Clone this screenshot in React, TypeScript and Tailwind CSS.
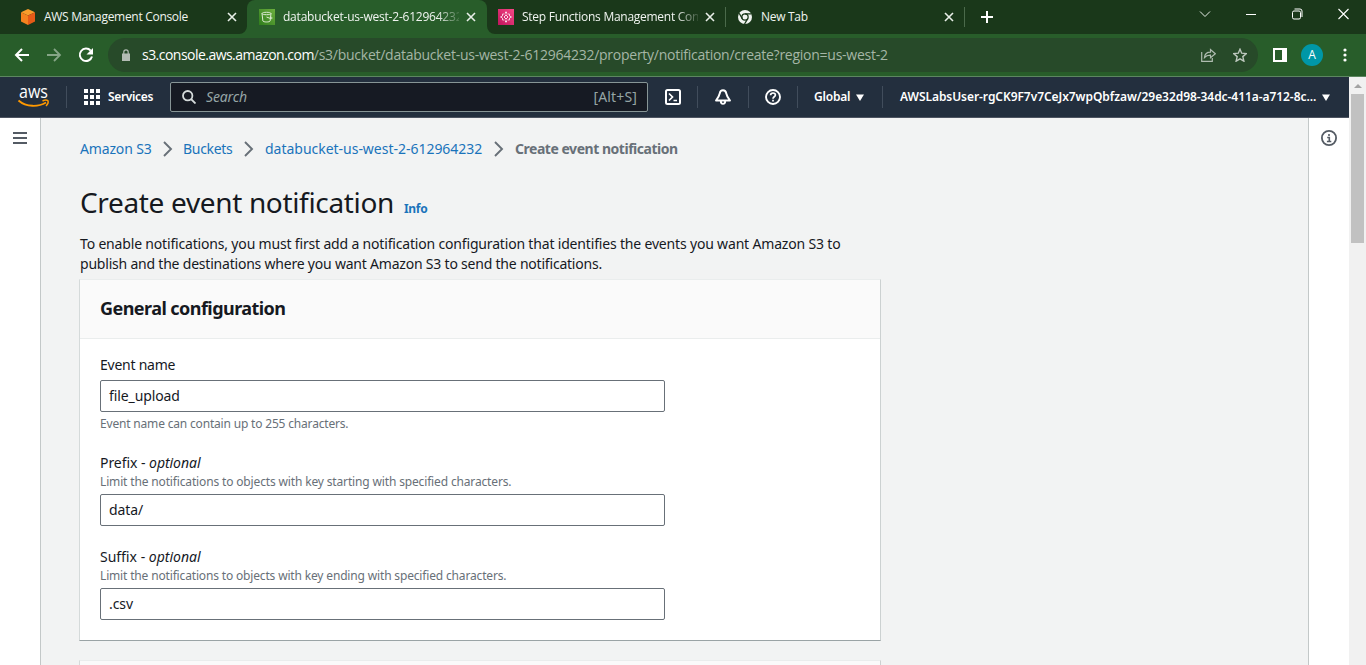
import React from "react";

const SANS = "font-['Noto_Sans',sans-serif]";
const CHROME = "font-['Open_Sans','Noto_Sans',sans-serif]";

function CloseX() {
  return (
    <svg width="10" height="10" viewBox="0 0 10 10" className="shrink-0" stroke="#e9efe9" strokeWidth="1.6">
      <path d="M1 1l8 8M9 1l-8 8" />
    </svg>
  );
}

function CubeIcon() {
  return (
    <svg width="16" height="16" viewBox="0 0 16 16" className="shrink-0">
      <path d="M8 0l7 3.2L8 6.6 1 3.2z" fill="#f99d2c" />
      <path d="M1 3.2l7 3.4V16l-7-3.6z" fill="#f5821f" />
      <path d="M15 3.2L8 6.6V16l7-3.6z" fill="#e65a17" />
    </svg>
  );
}

function BucketIcon() {
  return (
    <svg width="16" height="16" viewBox="0 0 16 16" className="shrink-0">
      <defs>
        <linearGradient id="bucket" x1="0" y1="1" x2="1" y2="0">
          <stop offset="0" stopColor="#2f7d1c" />
          <stop offset="1" stopColor="#6cae3e" />
        </linearGradient>
      </defs>
      <path fill="url(#bucket)" d="M0 0h16v16H0z" />
      <g fill="none" stroke="#dcebd3" strokeWidth="1">
        <path d="M3 4.500c0-1.600 9-1.600 9 0s-9 1.600-9 0l.9 7.500c.3 1.300 6.900 1.300 7.200 0L12 4.500M7.500 8l4 1.500c2 .6 2.200-.6.3-1.800" />
      </g>
    </svg>
  );
}

function StepIcon() {
  return (
    <svg width="16" height="16" viewBox="0 0 16 16" className="shrink-0">
      <defs>
        <linearGradient id="steps" x1="0" y1="1" x2="1" y2="0">
          <stop offset="0" stopColor="#c0145c" />
          <stop offset="1" stopColor="#f64785" />
        </linearGradient>
      </defs>
      <path fill="url(#steps)" d="M0 0h16v16H0z" />
      <g fill="none" stroke="#fbd9e7" strokeWidth="1">
        <path d="M8 2.500v3M8 10.500v3M7 3.500h2M7 12.500h2M8 6l2 2-2 2-2-2z" />
        <path d="M6.500 5h-2v2L2.500 8l2 1v2h2M9.500 5h2v2l2 1-2 1v2h-2" strokeWidth=".9" />
      </g>
    </svg>
  );
}

function ChromeIcon() {
  return (
    <svg width="14" height="14" viewBox="0 0 24 24" className="shrink-0">
      <circle cx="12" cy="12" r="12" fill="#f1f4f1" />
      <g stroke="#1a381a" strokeWidth="2.200" fill="none">
        <circle cx="12" cy="12" r="5.400" />
        <path d="M12 6.600h11M7.300 14.700L2 5.500M16.700 14.700L11.200 24" />
      </g>
    </svg>
  );
}

function TabStrip() {
  return (
    <div className="flex h-[34px] bg-[#1a381a] text-[12px] leading-4 tracking-[-0.3px] text-[#f0f4f0]">
      <div className="flex w-[247px] items-center rounded-br-lg bg-[#1a381a] pr-[10px] pl-5">
        <CubeIcon />
        <span className="ml-2 flex-1 whitespace-nowrap">AWS Management Console</span>
        <CloseX />
      </div>
      <div className="relative flex w-[240px] items-center rounded-t-lg bg-[#285d2a] pr-[11px] pl-3">
        <svg width="8" height="8" viewBox="0 0 8 8" className="absolute bottom-0 -left-2" fill="#285d2a"><path d="M8 0v8H0a8 8 0 0 0 8-8z" /></svg>
        <svg width="8" height="8" viewBox="0 0 8 8" className="absolute -right-2 bottom-0" fill="#285d2a"><path d="M0 0v8h8a8 8 0 0 1-8-8z" /></svg>
        <BucketIcon />
        <span className="ml-2 w-[176px] overflow-hidden tracking-[-0.22px] whitespace-nowrap [mask-image:linear-gradient(to_right,black_154px,transparent_180px)]">databucket-us-west-2-612964232</span>
        <span className="flex-1" />
        <CloseX />
      </div>
      <div className="flex w-[238px] items-center pr-[10px] pl-[11px]">
        <StepIcon />
        <span className="ml-2 w-[176px] overflow-hidden tracking-[-0.27px] whitespace-nowrap [mask-image:linear-gradient(to_right,black_154px,transparent_180px)]">Step Functions Management Console</span>
        <span className="flex-1" />
        <CloseX />
      </div>
      <div className="my-[7px] flex w-[240px] items-center border-x border-[#4b6a4b] pr-[10px] pl-3">
        <ChromeIcon />
        <span className="ml-[9px] flex-1 whitespace-nowrap">New Tab</span>
        <CloseX />
      </div>
      <svg width="12" height="12" viewBox="0 0 12 12" className="mt-[11px] ml-4" stroke="#fff" strokeWidth="2"><path d="M6 0v12M0 6h12" /></svg>
      <div className="ml-auto flex items-center gap-[35px] pr-[17px] pb-[6px]">
        <svg width="12" height="12" viewBox="0 0 12 12" fill="none" stroke="#e8ede8"><path d="M1 3.500l5 5 5-5" /></svg>
        <svg width="10" height="12" viewBox="0 0 10 12" stroke="#fff" className="mr-px"><path d="M0 6.500h10" /></svg>
        <svg width="11" height="12" viewBox="0 0 11 12" fill="none" stroke="#fff"><rect x=".5" y="3" width="8" height="8" rx="1.500" /><path d="M2.500 1h5.500a2 2 0 0 1 2 2v6" /></svg>
        <svg width="11" height="12" viewBox="0 0 11 12" stroke="#fff" strokeWidth="1.100"><path d="M.5 1l10 10M10.500 1l-10 10" /></svg>
      </div>
    </div>
  );
}

function AddressBar() {
  return (
    <div className="flex h-[43px] items-center border-b border-[#5c8660] bg-[#285d2a]">
      <svg width="16" height="14" viewBox="0 0 16 14" fill="none" stroke="#fff" strokeWidth="2" className="ml-[14px]"><path d="M15 7H2M8 1L2 7l6 6" /></svg>
      <svg width="16" height="14" viewBox="0 0 16 14" fill="none" stroke="#86a587" strokeWidth="1.800" className="ml-4"><path d="M1 7h13M8 1l6 6-6 6" /></svg>
      <svg width="16" height="16" viewBox="0 0 16 16" className="ml-4"><path d="M12.700 3.700A6.200 6.200 0 1 0 14 9.500" fill="none" stroke="#fff" strokeWidth="2" /><path d="M15 1v6.500H8.500z" fill="#fff" /></svg>
      <div className="ml-[14px] flex h-[34px] w-[1150px] items-center rounded-full bg-[#274a29] pr-[11px] pl-[14px]">
        <svg width="8" height="12" viewBox="0 0 8 12"><path d="M0 4.500h8V12H0z" fill="#b3bcb4" /><path d="M1.800 5V3a2.200 2.200 0 0 1 4.400 0v2" fill="none" stroke="#b3bcb4" strokeWidth="1.200" /></svg>
        <span className="ml-[12px] text-[14px] leading-5 tracking-[-0.26px] whitespace-nowrap text-[#a5b6a6]"><span className="tracking-[-0.53px] text-white">s3.console.aws.amazon.com</span>/s3/bucket/databucket-us-west-2-612964232/property/notification/create?region=us-west-2</span>
        <svg width="15" height="14" viewBox="0 0 15 14" fill="none" stroke="#afbcb0" strokeWidth="1.200" className="ml-auto"><path d="M.7 4v9.300h10.600V10M3.500 9.500c.3-3.500 2.300-5.300 6-5.300V1.500l4.800 4.300-4.800 4V7.200c-2.700 0-4.500.5-6 2.300z" /></svg>
        <svg width="14" height="14" viewBox="0 0 14 14" fill="none" stroke="#bdc8be" strokeWidth="1.400" className="ml-[17px]"><path d="M7 1.200l1.700 4 4.600.4-3.500 3 1.100 4.600L7 10.800l-3.900 2.400 1.100-4.600-3.500-3 4.600-.4z" /></svg>
      </div>
      <svg width="14" height="14" viewBox="0 0 14 14" className="ml-[15px]"><path d="M0 0h14v14H0zM2 2v10h7V2z" fill="#fff" fillRule="evenodd" /></svg>
      <div className="ml-[14px] flex h-[22px] w-[22px] items-center justify-center rounded-full bg-[#0097a7] text-[12px] text-white">A</div>
      <svg width="4" height="14" viewBox="0 0 4 14" fill="#fff" className="ml-[20px]"><circle cx="2" cy="2" r="1.600" /><circle cx="2" cy="7" r="1.600" /><circle cx="2" cy="12" r="1.600" /></svg>
    </div>
  );
}

function Divider({ className = "" }: { className?: string }) {
  return <div className={`h-[22px] w-px bg-[#414d5c] ${className}`} />;
}

function AwsNav() {
  return (
    <div className="flex h-[41px] items-center border-b border-[#4d5461] bg-[#232f3e] text-[12px] font-semibold text-white">
      <svg width="32" height="24" viewBox="0 0 32 24" className="ml-[18px] overflow-visible">
        <text x="1" y="12.500" textLength="29" lengthAdjust="spacingAndGlyphs" fontFamily="Open Sans" fontSize="17.500" fontWeight="500" fill="#fff">aws</text>
        <path d="M.5 15.500c8 7 20 6.500 27.500 2" fill="none" stroke="#f90" strokeWidth="1.900" />
        <path d="M24.500 16c2-1 4.500-1 5.500-.2.500 1.300-.5 3.800-2 5.200" fill="none" stroke="#f90" strokeWidth="1.400" />
      </svg>
      <Divider className="ml-4" />
      <svg width="16" height="16" viewBox="0 0 16 16" fill="#fff" className="ml-[17px]">
        <path d="M0 0h4v4H0zM6 0h4v4H6zM12 0h4v4h-4zM0 6h4v4H0zM6 6h4v4H6zM12 6h4v4h-4zM0 12h4v4H0zM6 12h4v4H6zM12 12h4v4h-4z" />
      </svg>
      <span className="ml-2 w-[46px] tracking-[-0.35px] whitespace-nowrap">Services</span>
      <div className="ml-4 flex h-[30px] w-[478px] items-center rounded-xs border border-[#879596] bg-[#161a23] pr-[10px] pl-[11px] text-[14px] leading-5 font-normal text-[#95a5a6]">
        <svg width="14" height="14" viewBox="0 0 14 14" fill="none" stroke="#d5dbdb" strokeWidth="1.800"><circle cx="5.700" cy="5.700" r="4.700" /><path d="M9 9l4.500 4.500" /></svg>
        <span className="ml-[10px] flex-1 pb-px tracking-[-0.15px] italic">Search</span>
        <span className="pb-px tracking-[0.15px]">[Alt+S]</span>
      </div>
      <svg width="16" height="16" viewBox="0 0 16 16" fill="none" stroke="#fff" strokeWidth="2" className="ml-[17px]"><rect x="1" y="1" width="14" height="14" rx="1.500" /><path d="M4 4.500L7.500 8 4 11.500M8.500 11.500H12" strokeWidth="1.700" /></svg>
      <Divider className="ml-4" />
      <svg width="16" height="16" viewBox="0 0 16 16" fill="none" stroke="#fff" strokeWidth="1.900" strokeLinejoin="round" className="ml-[17px]"><path d="M8 1.200c-1.900 0-3 1.300-3.300 3.300C4.300 7 3.300 8.500 1 11.500h14c-2.300-3-3.300-4.500-3.700-7C11 2.500 9.900 1.200 8 1.200zM5.800 12c0 3.800 4.400 3.800 4.400 0" /></svg>
      <Divider className="ml-[17px]" />
      <svg width="16" height="16" viewBox="0 0 16 16" fill="none" stroke="#fff" strokeWidth="1.900" className="ml-4"><circle cx="8" cy="8" r="7" /><path d="M5.600 6.300C5.600 3.300 10.400 3.300 10.400 6c0 1.700-2.400 1.800-2.400 3.700M8 10.800v1.800" strokeWidth="1.700" /></svg>
      <Divider className="ml-4" />
      <span className="ml-4 w-[37px] tracking-[-0.2px] whitespace-nowrap">Global</span>
      <svg width="8" height="7" viewBox="0 0 8 7" fill="#fff" className="ml-[5px]"><path d="M0 .5h8L4 7z" /></svg>
      <Divider className="ml-[18px]" />
      <span className="ml-[17px] w-[417px] tracking-[-0.06px] whitespace-nowrap">AWSLabsUser-rgCK9F7v7CeJx7wpQbfzaw/29e32d98-34dc-411a-a712-8c...</span>
      <svg width="8" height="7" viewBox="0 0 8 7" fill="#fff" className="ml-[5px]"><path d="M0 .5h8L4 7z" /></svg>
    </div>
  );
}

function Chevron() {
  return (
    <svg width="10" height="16" viewBox="0 0 10 16" fill="none" stroke="#687078" strokeWidth="1.900" className="block shrink-0"><path d="M1 1l7 7-7 7" /></svg>
  );
}

function TextField({ value }: { value: string }) {
  return (
    <div className="h-8 w-[565px] rounded-xs border border-[#687078] bg-white pl-2 text-[14px] leading-[30px] tracking-[-0.1px]">{value}</div>
  );
}

export default function App() {
  return (
    <div className="flex h-[665px] w-[1366px] flex-col overflow-hidden bg-[#f2f3f3]">
      <div className={CHROME}>
        <TabStrip />
        <AddressBar />
      </div>
      <div className={`flex min-h-0 flex-1 ${SANS}`}>
        <div className="flex w-[1349px] flex-col">
          <AwsNav />
          <div className="flex min-h-0 flex-1 text-[#16191f]">
            <div className="w-[41px] border-r border-[#c3c8c8] bg-white pt-[14px] pl-[13px]">
              <svg width="14" height="12" viewBox="0 0 14 12" fill="#545b64"><path d="M0 0h14v2H0zM0 5h14v2H0zM0 10h14v2H0z" /></svg>
            </div>
            <main className="min-w-0 flex-1 pl-[39px]">
              <nav className="mt-[21px] flex h-5 items-center text-[14px] leading-5 whitespace-nowrap text-[#1a73bb]">
                <span className="w-[73px] tracking-[-0.15px]">Amazon S3</span>
                <span className="ml-[10px]"><Chevron /></span>
                <span className="ml-[10px] w-[51px] tracking-[-0.3px]">Buckets</span>
                <span className="ml-[10px]"><Chevron /></span>
                <span className="ml-[11px] w-[219px] tracking-[-0.02px]">databucket-us-west-2-612964232</span>
                <span className="ml-[10px]"><Chevron /></span>
                <span className="ml-[11px] font-bold tracking-[-0.47px] text-[#687078]">Create event notification</span>
              </nav>
              <div className="mt-[25px] flex items-baseline whitespace-nowrap">
                <h1 className="w-[313px] text-[28px] leading-9 tracking-[-0.34px]">Create event notification</h1>
                <span className="ml-[11px] text-[12px] font-bold tracking-[-0.3px] text-[#1a73bb]">Info</span>
              </div>
              <p className="mt-[14px] text-[14px] leading-5 tracking-[-0.175px] whitespace-nowrap">
                To enable notifications, you must first add a notification configuration that identifies the events you want Amazon S3 to<br />
                <span className="tracking-[-0.21px]">publish and the destinations where you want Amazon S3 to send the notifications.</span>
              </p>
              <section className="mt-[5px] -ml-px h-[362px] w-[802px] border border-t-[#eaeded] border-r-[#ccd1d1] border-b-[#9aa3a5] border-l-[#d5dada] bg-white">
                <div className="flex h-[59px] items-center border-b border-[#eaeded] bg-[#fafafa] pb-[2px] pl-5">
                  <h2 className="text-[18px] leading-6 font-bold tracking-[-0.55px]">General configuration</h2>
                </div>
                <div className="pt-4 pl-5 whitespace-nowrap">
                  <div className="h-[25px] text-[14px] leading-5 tracking-[-0.25px]">Event name</div>
                  <TextField value="file_upload" />
                  <div className="mt-1 text-[12px] leading-4 tracking-[-0.18px] text-[#687078]">Event name can contain up to 255 characters.</div>
                  <div className="mt-[21px] text-[14px] leading-5 tracking-[-0.05px]">Prefix - <i>optional</i></div>
                  <div className="mt-px mb-1 text-[12px] leading-4 tracking-[-0.15px] text-[#687078]">Limit the notifications to objects with key starting with specified characters.</div>
                  <TextField value="data/" />
                  <div className="mt-[21px] text-[14px] leading-5">Suffix - <i>optional</i></div>
                  <div className="mt-px mb-1 text-[12px] leading-4 tracking-[-0.16px] text-[#687078]">Limit the notifications to objects with key ending with specified characters.</div>
                  <TextField value=".csv" />
                </div>
              </section>
              <section className="mt-[19px] -ml-px h-10 w-[802px] border border-t-[#eaeded] border-r-[#ccd1d1] border-l-[#d5dada] bg-[#fafafa]" />
            </main>
            <div className="w-[41px] border-l border-[#c3c8c8] bg-white pt-3 pl-3">
              <svg width="16" height="16" viewBox="0 0 16 16" fill="none" stroke="#545b64" strokeWidth="1.800"><circle cx="8" cy="8" r="7.100" /><path d="M8 4v2M6.200 7.500H8.300v3.800M5.900 11.500h4.400" strokeWidth="1.600" /></svg>
            </div>
          </div>
        </div>
        <div className="w-[17px] bg-[#f1f1f1] pt-[7px] pl-[2px]">
          <svg width="8" height="4" viewBox="0 0 8 4" fill="#a3a3a3" className="ml-[2.500px]"><path d="M4 0l4 4H0z" /></svg>
          <div className="mt-[6px] h-[149px] w-[13px] bg-[#c1c1c1]" />
        </div>
      </div>
    </div>
  );
}
